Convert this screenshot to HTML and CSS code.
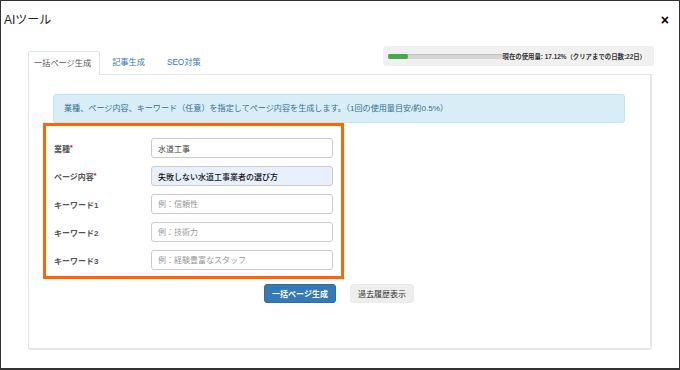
FILE: index.html
```html
<!DOCTYPE html>
<html lang="ja">
<head>
    <meta charset="UTF-8">
    <meta name="viewport" content="width=device-width, initial-scale=1.0">
    <title>AIツール</title>
    <link rel="stylesheet" href="styles.css">
</head>
<body>

<div class="modal">
    <div class="modal-header">
        <h1 class="modal-title">AIツール</h1>
        <span class="close">&times;</span>
    </div>

    <div class="modal-body">
        <div class="tab-row">
            <ul class="tabs">
                <li class="tab active">一括ページ生成</li>
                <li class="tab">記事生成</li>
                <li class="tab">SEO対策</li>
            </ul>
            <div class="usage">
                <div class="usage-bar"><div class="usage-fill" style="width: 17.12%"></div></div>
                <span class="usage-text">現在の使用量: 17.12%（クリアまでの日数:22日）</span>
            </div>
        </div>

        <div class="tab-panel">
            <div class="alert">業種、ページ内容、キーワード（任意）を指定してページ内容を生成します。（1回の使用量目安/約0.5%）</div>

            <form class="form-box">
                <div class="form-row">
                    <label for="industry">業種<span class="req">*</span></label>
                    <input type="text" id="industry" value="水道工事">
                </div>
                <div class="form-row">
                    <label for="content">ページ内容<span class="req">*</span></label>
                    <input type="text" id="content" class="filled" value="失敗しない水道工事業者の選び方">
                </div>
                <div class="form-row">
                    <label for="kw1">キーワード1</label>
                    <input type="text" id="kw1" placeholder="例：信頼性">
                </div>
                <div class="form-row">
                    <label for="kw2">キーワード2</label>
                    <input type="text" id="kw2" placeholder="例：技術力">
                </div>
                <div class="form-row">
                    <label for="kw3">キーワード3</label>
                    <input type="text" id="kw3" placeholder="例：経験豊富なスタッフ">
                </div>
            </form>

            <div class="actions">
                <button type="button" class="btn btn-primary">一括ページ生成</button>
                <button type="button" class="btn btn-default">過去履歴表示</button>
            </div>
        </div>
    </div>
</div>

</body>
</html>
```

FILE: styles.css
```css
body {
    margin: 0;
    padding: 0;
    font-family: "Liberation Sans", "Noto Sans CJK JP", sans-serif;
    color: #333;
    background: #fff;
}

.modal {
    width: 680px;
    height: 370px;
    box-sizing: border-box;
    border: 1px solid #333;
    border-bottom-width: 2px;
    background: #fff;
}

.modal-header {
    display: flex;
    justify-content: space-between;
    align-items: flex-start;
    height: 45px;
    box-sizing: border-box;
    padding: 12px 10px 0 3px;
}

.modal-title {
    margin: 0;
    font-size: 12px;
    font-weight: normal;
    line-height: 14px;
    color: #222;
}

.close {
    font-size: 14px;
    font-weight: bold;
    line-height: 14px;
    color: #000;
}

.modal-body {
    margin: 0 27px 0 27px;
}

.tab-row {
    display: flex;
    justify-content: space-between;
    align-items: flex-start;
}

.tabs {
    display: flex;
    list-style: none;
    margin: 4px 0 0 0;
    padding: 0;
}

.tab {
    height: 23px;
    line-height: 23px;
    padding: 0 8px 0 5px;
    margin-right: 2px;
    font-size: 8.2px;
    color: #337ab7;
    border: 1px solid transparent;
    border-bottom: none;
    border-radius: 3px 3px 0 0;
}

.tab + .tab {
    padding: 0 9px;
}

.tab.active {
    color: #555;
    background: #fff;
    border-color: #e2e2e2;
    position: relative;
    top: 1px;
}

.usage {
    display: flex;
    align-items: center;
    width: 271px;
    height: 20px;
    box-sizing: border-box;
    padding: 0 8px 0 5px;
    margin-right: -2px;
    background: #f0f0f0;
    border-radius: 3px;
}

.usage-bar {
    width: 115px;
    height: 5px;
    background: #d6d6d6;
    border-radius: 1px;
    box-shadow: inset 0 1px 1px rgba(0, 0, 0, 0.1);
}

.usage-fill {
    height: 100%;
    background: #48a948;
    border-radius: 2px;
}

.usage-text {
    font-size: 6.4px;
    font-weight: bold;
    color: #333;
    white-space: nowrap;
}

.tab-panel {
    height: 276px;
    box-sizing: border-box;
    padding: 19px 25px 0 24px;
    border: 1px solid #e6e6e6;
    border-right-width: 2px;
    border-bottom-width: 2px;
    border-radius: 0 0 3px 3px;
}

.alert {
    height: 29px;
    box-sizing: border-box;
    padding: 0 10px;
    line-height: 27px;
    font-size: 8.1px;
    color: #31708f;
    background: #d9edf7;
    border: 1px solid #bce8f1;
    border-radius: 3px;
    white-space: nowrap;
}

.form-box {
    width: 301px;
    box-sizing: border-box;
    margin: 0 0 0 -10px;
    padding: 12px 8px 6px 8px;
    border: 3px solid #ff6600;
    display: flex;
    flex-direction: column;
    gap: 8px;
}

.form-row {
    display: flex;
    align-items: center;
}

.form-row label {
    width: 97px;
    font-size: 8px;
    font-weight: bold;
    color: #555;
}

.req {
    color: #d9001b;
    font-size: 7px;
    vertical-align: 2px;
}

.form-row input {
    width: 182px;
    height: 20px;
    box-sizing: border-box;
    padding: 0 6px;
    font-family: inherit;
    font-size: 8px;
    color: #444;
    border: 1px solid #ccc;
    border-radius: 3px;
    outline: none;
}

.form-row input::placeholder {
    color: #999;
}

.form-row input.filled {
    background: #e8f0fe;
    color: #111;
    font-weight: 500;
}

.actions {
    display: flex;
    justify-content: center;
    gap: 14px;
    margin-top: 5px;
}

.btn {
    height: 19px;
    padding: 0 7px;
    font-family: inherit;
    font-size: 8px;
    border-radius: 3px;
    cursor: pointer;
}

.btn-primary {
    color: #fff;
    font-weight: bold;
    background: #337ab7;
    border: 1px solid #2e6da4;
}

.btn-default {
    color: #333;
    background: #eee;
    border: 1px solid #eaeaea;
}
```
